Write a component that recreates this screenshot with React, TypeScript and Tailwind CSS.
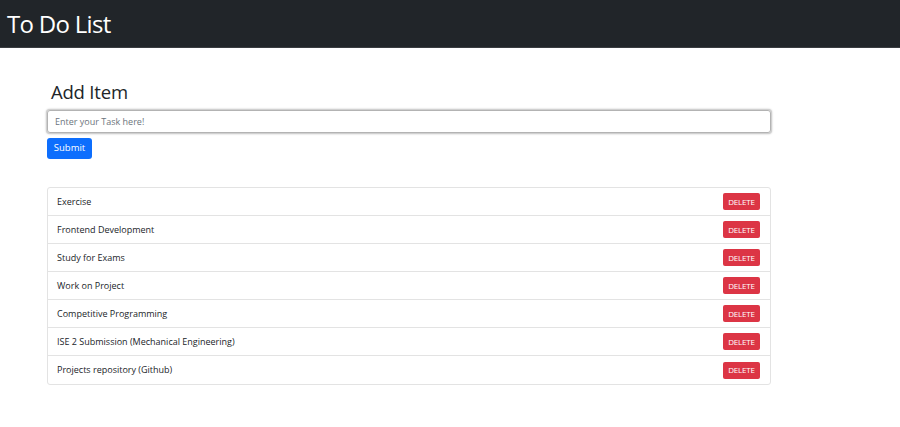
import { useState } from "react";

const TASKS = [
  "Exercise",
  "Frontend Development",
  "Study for Exams",
  "Work on Project",
  "Competitive Programming",
  "ISE 2 Submission (Mechanical Engineering)",
  "Projects repository (Github)",
];

export default function App() {
  const [items, setItems] = useState(TASKS);
  const [text, setText] = useState("");

  const add = () => {
    if (!text.trim()) return;
    setItems((v) => [...v, text.trim()]);
    setText("");
  };

  return (
    <div
      className="min-h-[427px] bg-white text-[#212529]"
      style={{ fontFamily: '"Open Sans", "Noto Sans", sans-serif' }}
    >
      {/* Navbar */}
      <header className="flex h-[48px] items-center border-b border-[#3a3d41] bg-[#212529] px-[7px]">
        <h1 className="text-[24px] leading-none font-normal tracking-[-0.7px] text-white">
          To Do List
        </h1>
      </header>

      <main className="ml-[47px] w-[724px]">
        <h2 className="mt-[32px] pl-[4px] text-[18.5px] leading-[24px] font-normal tracking-[-0.2px]">
          Add Item
        </h2>
        <input
          type="text"
          value={text}
          onChange={(e) => setText(e.target.value)}
          placeholder="Enter your Task here!"
          className="mt-[6px] block h-[23px] w-full rounded-[3px] border border-[#b3b3b3] px-[7px] text-[9px] shadow-[0_0_0_1px_#d0d0d0,0_0_2px_1px_rgba(0,0,0,0.25)] outline-none placeholder:text-[#6c757d]"
        />
        <button
          type="button"
          onClick={add}
          className="mt-[5px] flex h-[21px] w-[45px] items-center justify-center rounded-[3px] bg-[#0d6efd] text-[9.5px] text-white"
        >
          Submit
        </button>

        <ul className="mt-[28px] rounded-[3px] border border-[#e3e3e3]">
          {items.map((item, i) => (
            <li
              key={item + i}
              className="flex h-[28px] items-center justify-between border-b border-[#e3e3e3] pr-[10px] pl-[9px] last:border-b-0"
            >
              <span className="text-[9px]">{item}</span>
              <button
                type="button"
                onClick={() => setItems((v) => v.filter((_, j) => j !== i))}
                className="flex h-[17px] w-[37px] items-center justify-center rounded-[2px] bg-[#dc3545] text-[8px] tracking-[-0.2px] text-white"
              >
                DELETE
              </button>
            </li>
          ))}
        </ul>
      </main>
    </div>
  );
}
